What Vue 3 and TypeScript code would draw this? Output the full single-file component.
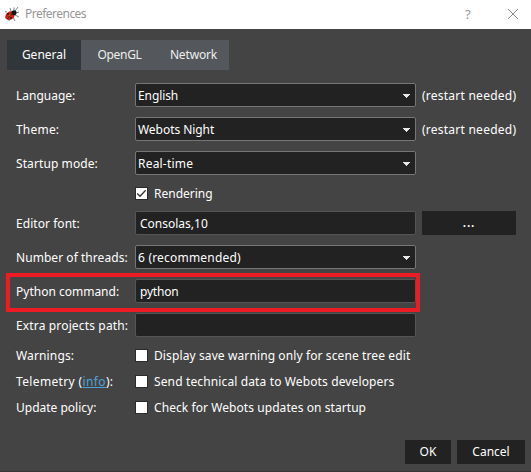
<script setup lang="ts">
import { ref } from 'vue'

interface Row {
  label: string
  kind: 'combo' | 'input' | 'check'
  value: string
  note?: string
  button?: boolean
  checked?: boolean
  link?: string
  highlight?: boolean
  labelSpacing?: number
  valueSpacing?: number
}

const tabs = ['General', 'OpenGL', 'Network']
const active = ref('General')

const rows = ref<Row[]>([
  { label: 'Language:', kind: 'combo', value: 'English', note: '(restart needed)', valueSpacing: -0.1 },
  { label: 'Theme:', kind: 'combo', value: 'Webots Night', note: '(restart needed)', labelSpacing: 0.2, valueSpacing: -0.05 },
  { label: 'Startup mode:', kind: 'combo', value: 'Real-time', labelSpacing: 0.09, valueSpacing: 0.2 },
  { label: '', kind: 'check', value: 'Rendering', checked: true },
  { label: 'Editor font:', kind: 'input', value: 'Consolas,10', button: true, labelSpacing: 0.05 },
  { label: 'Number of threads:', kind: 'combo', value: '6 (recommended)', labelSpacing: 0.05, valueSpacing: 0.2 },
  { label: 'Python command:', kind: 'input', value: 'python', highlight: true, valueSpacing: -0.2 },
  { label: 'Extra projects path:', kind: 'input', value: '', labelSpacing: 0.15 },
  { label: 'Warnings:', kind: 'check', value: 'Display save warning only for scene tree edit', labelSpacing: 0.15, valueSpacing: 0.11 },
  { label: 'Telemetry (', link: 'info', kind: 'check', value: 'Send technical data to Webots developers', labelSpacing: 0.36, valueSpacing: 0.13 },
  { label: 'Update policy:', kind: 'check', value: 'Check for Webots updates on startup', valueSpacing: 0.07 },
])

const spacing = (v?: number) => (v === undefined ? undefined : { letterSpacing: v + 'px' })
</script>

<template>
  <div class="window">
    <header class="titlebar">
      <svg class="bug" width="16" height="16" viewBox="0 0 16 16">
        <path d="M7 5 6 2M10 4V1.500M11 5l3-4M12 7l3-1M11 9l4 2M9 11l2 4M3 6 1 5.500M3 11l-2 1M5 13v2" fill="none" stroke="#666" stroke-width=".8" />
        <ellipse cx="6" cy="9.700" rx="5" ry="4" transform="rotate(-35 6 9.700)" fill="#c9220d" />
        <circle cx="10" cy="6.700" r="2.500" fill="#151515" />
        <path d="m10 6-7 7" stroke="#441009" stroke-width=".8" />
        <circle cx="4" cy="8" r="1" fill="#351511" />
        <circle cx="7" cy="12" r="1" fill="#351511" />
        <circle cx="5.500" cy="9.500" r=".8" fill="#ef5133" />
      </svg>
      <span class="title">Preferences</span>
      <span class="help">?</span>
      <svg class="close" width="10" height="10" viewBox="0 0 10 10">
        <path d="m0 0 10 10M10 0 0 10" stroke="#888" stroke-width="1" />
      </svg>
    </header>

    <nav class="tabs">
      <button v-for="t in tabs" :key="t" :class="['tab', t.toLowerCase(), { active: t === active }]" @click="active = t">{{ t }}</button>
    </nav>

    <main class="form">
      <div v-for="r in rows" :key="r.value + r.label" :class="['row', r.kind]">
        <div class="label">
          <span :style="spacing(r.labelSpacing)">{{ r.label }}<template v-if="r.link"><a class="link">{{ r.link }}</a>):</template></span>
        </div>
        <div v-if="r.kind === 'check'" class="option" @click="r.checked = !r.checked">
          <span class="box">
            <svg v-if="r.checked" width="11" height="11" viewBox="0 0 11 11"><path d="m1.200 5.500 2.800 2.800 5.700-6" fill="none" stroke="#333" stroke-width="1.300" /></svg>
          </span>
          <span :style="spacing(r.valueSpacing)">{{ r.value }}</span>
        </div>
        <div v-else class="field">
          <span :style="spacing(r.valueSpacing)">{{ r.value }}</span>
          <svg v-if="r.kind === 'combo'" width="7" height="4" viewBox="0 0 7 4" shape-rendering="crispEdges"><path d="M0 0h7v1H6v1H5v1H4v1H3V3H2V2H1V1H0z" fill="#e8e8e8" /></svg>
        </div>
        <span v-if="r.note" class="note">{{ r.note }}</span>
        <button v-if="r.button" class="btn browse">...</button>
        <div v-if="r.highlight" class="highlight"></div>
      </div>
    </main>

    <footer class="actions">
      <button class="btn ok">OK</button>
      <button class="btn cancel">Cancel</button>
    </footer>
  </div>
</template>

<style>
body { margin: 0; overflow: hidden; }
</style>

<style scoped>
.window { width: 531px; height: 472px; box-sizing: border-box; display: flex; flex-direction: column; background: #444; border-bottom: 1px solid #383637; color: #fff; font: 12px/16px "Noto Sans", sans-serif; white-space: nowrap; }
button { font: inherit; color: inherit; border: 0; padding: 0; margin: 0; }
.titlebar { height: 29px; box-sizing: border-box; background: #fff; color: #969696; display: flex; align-items: center; padding: 0 12px 2px 4px; }
.title { margin-left: 5px; flex: 1; letter-spacing: -0.52px; }
.help { width: 8px; margin-right: 35px; font-size: 13px; }
.close { margin-right: 1px; }
.tabs { display: flex; padding: 11px 0 0 7px; }
.tab { height: 30px; background: #54585d; color: #eee; }
.tab.general { width: 74px; }
.tab.opengl { width: 77px; letter-spacing: -0.3px; }
.tab.network { width: 71px; letter-spacing: -0.15px; }
.tab.active { background: #31363b; color: #fff; }
.form { display: flex; flex-direction: column; gap: 10px; padding: 13px 0 0 16px; }
.row { position: relative; height: 24px; display: grid; grid-template-columns: 119px 281px 94px; column-gap: 0; align-items: center; }
.row.check { height: 16px; }
.label { padding-top: 1px; }
.field { height: 24px; box-sizing: border-box; border: 1px solid #767676; border-radius: 2px; background: #222; display: flex; align-items: center; justify-content: space-between; padding: 1px 5px 0 2px; }
.row.input .field { border-color: #555; padding-left: 4px; }
.option { display: flex; align-items: center; padding-top: 1px; grid-column: 2 / 4; }
.box { width: 13px; height: 13px; box-sizing: border-box; border: 1px solid #2b2b2b; background: #fff; margin: 0 6px 2px 0; display: flex; }
.note, .browse { margin-left: 6px; }
.note { padding-top: 1px; letter-spacing: 0.24px; }
.link { color: #4ba3d9; text-decoration: underline; }
.btn { background: #222; height: 24px; }
.browse { width: 94px; letter-spacing: 0.8px; font-weight: 600; }
.highlight { position: absolute; left: -10px; top: -6px; width: 414px; height: 39px; box-sizing: border-box; border: 4px solid #ed1c24; pointer-events: none; }
.actions { display: flex; justify-content: flex-end; gap: 6px; padding: 0 6px 7px 0; margin-top: auto; }
.ok { width: 46px; }
.cancel { width: 68px; }
</style>
